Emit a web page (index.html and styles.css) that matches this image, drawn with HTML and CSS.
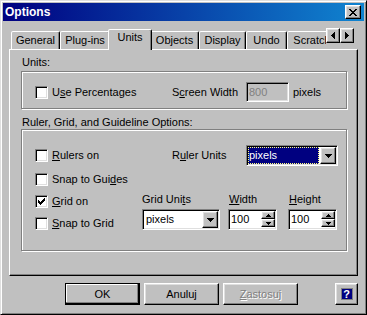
FILE: index.html
```html
<!DOCTYPE html>
<html>
<head>
<meta charset="utf-8">
<title>Options</title>
<link rel="stylesheet" href="styles.css">
</head>
<body>
<div class="window">
  <div class="titlebar">
    <span class="title">Options</span>
    <span class="close raised">
      <svg width="8" height="7" viewBox="0 0 8 7" shape-rendering="crispEdges"><path fill="#000" d="M0 0h2v1h-2z M6 0h2v1h-2z M1 1h2v1h-2z M5 1h2v1h-2z M2 2h4v1h-4z M3 3h2v1h-2z M2 4h4v1h-4z M1 5h2v1h-2z M5 5h2v1h-2z M0 6h2v1h-2z M6 6h2v1h-2z"/></svg>
    </span>
  </div>
  <div class="body">
    <div class="tabstrip">
      <div class="tabs">
        <div class="tab t-general">General</div>
        <div class="tab t-plugins">Plug-ins</div>
        <div class="tab t-units selected">Units</div>
        <div class="tab t-objects">Objects</div>
        <div class="tab t-display">Display</div>
        <div class="tab t-undo">Undo</div>
        <div class="tab t-scratch">Scratch</div>
      </div>
      <div class="tabscroll">
        <span class="sbtn raised"><svg width="4" height="7" viewBox="0 0 4 7" shape-rendering="crispEdges"><path fill="#000" d="M0 3h1v1h-1z M1 2h1v3h-1z M2 1h1v5h-1z M3 0h1v7h-1z"/></svg></span>
        <span class="sbtn raised"><svg width="4" height="7" viewBox="0 0 4 7" shape-rendering="crispEdges"><path fill="#000" d="M3 3h1v1h-1z M2 2h1v3h-1z M1 1h1v5h-1z M0 0h1v7h-1z"/></svg></span>
      </div>
    </div>
    <div class="panel">
      <div class="grouplabel">Units:</div>
      <div class="group g1">
        <label class="check w137"><span class="box"></span><span>U<u>s</u>e Percentages</span></label>
        <span class="lbl w74">S<u>c</u>reen Width</span>
        <span class="edit disabled">800</span>
        <span class="lbl pixels">pixels</span>
      </div>
      <div class="grouplabel gl2">Ruler, Grid, and Guideline Options:</div>
      <div class="group g2">
        <div class="rowA">
          <label class="check w137"><span class="box"></span><span><u>R</u>ulers on</span></label>
          <span class="lbl w74">R<u>u</u>ler Units</span>
          <div class="combo c-ruler">
            <div class="combo-text hl">pixels</div>
            <span class="dd raised"><svg width="7" height="4" viewBox="0 0 7 4" shape-rendering="crispEdges"><path fill="#000" d="M0 0h7v1h-7z M1 1h5v1h-5z M2 2h3v1h-3z M3 3h1v1h-1z"/></svg></span>
          </div>
        </div>
        <div class="rowB">
          <label class="check"><span class="box"></span><span>Snap to Gui<u>d</u>es</span></label>
        </div>
        <div class="lower">
          <div class="leftcol">
            <label class="check"><span class="box"><svg width="7" height="7" viewBox="0 0 7 7" shape-rendering="crispEdges"><path fill="#000" d="M6 0h1v1h-1z M5 1h2v1h-2z M0 2h1v1h-1z M4 2h3v1h-3z M0 3h2v1h-2z M3 3h3v1h-3z M0 4h5v1h-5z M1 5h3v1h-3z M2 6h1v1h-1z"/></svg></span><span><u>G</u>rid on</span></label>
            <label class="check second"><span class="box"></span><span><u>S</u>nap to Grid</span></label>
          </div>
          <div class="fields">
            <span class="lbl">Grid Uni<u>t</u>s</span>
            <span class="lbl ind"><u>W</u>idth</span>
            <span class="lbl ind"><u>H</u>eight</span>
            <div class="combo c-grid">
              <div class="combo-text">pixels</div>
              <span class="dd raised"><svg width="7" height="4" viewBox="0 0 7 4" shape-rendering="crispEdges"><path fill="#000" d="M0 0h7v1h-7z M1 1h5v1h-5z M2 2h3v1h-3z M3 3h1v1h-1z"/></svg></span>
            </div>
            <div class="spin">
              <span class="val">100</span>
              <span class="updown">
                <span class="raised"><svg width="5" height="3" viewBox="0 0 5 3" shape-rendering="crispEdges"><path fill="#000" d="M2 0h1v1h-1z M1 1h3v1h-3z M0 2h5v1h-5z"/></svg></span>
                <span class="raised"><svg width="5" height="3" viewBox="0 0 5 3" shape-rendering="crispEdges"><path fill="#000" d="M0 0h5v1h-5z M1 1h3v1h-3z M2 2h1v1h-1z"/></svg></span>
              </span>
            </div>
            <div class="spin">
              <span class="val">100</span>
              <span class="updown">
                <span class="raised"><svg width="5" height="3" viewBox="0 0 5 3" shape-rendering="crispEdges"><path fill="#000" d="M2 0h1v1h-1z M1 1h3v1h-3z M0 2h5v1h-5z"/></svg></span>
                <span class="raised"><svg width="5" height="3" viewBox="0 0 5 3" shape-rendering="crispEdges"><path fill="#000" d="M0 0h5v1h-5z M1 1h3v1h-3z M2 2h1v1h-1z"/></svg></span>
              </span>
            </div>
          </div>
        </div>
      </div>
    </div>
    <div class="footer">
      <span class="btn default">OK</span>
      <span class="btn">Anuluj</span>
      <span class="btn disabled"><u>Z</u>astosuj</span>
      <span class="btn help"><span class="helpicon">?</span></span>
    </div>
  </div>
</div>
</body>
</html>
```
FILE: styles.css
```css
* { box-sizing: border-box; }
html, body { margin: 0; padding: 0; }
body {
  width: 367px;
  height: 315px;
  overflow: hidden;
  background: #c0c0c0;
  font-family: "Liberation Sans", Arial, sans-serif;
  font-size: 11px;
  line-height: 13px;
  color: #000;
}
u { text-decoration: underline; text-underline-offset: 1px; }

.window {
  width: 367px;
  height: 315px;
  background: #c0c0c0;
  border: 1px solid;
  border-color: #dfdfdf #000 #000 #dfdfdf;
  box-shadow: inset 1px 1px #fff, inset -1px -1px #808080;
  padding: 2px;
  display: flex;
  flex-direction: column;
}

.raised {
  background: #c0c0c0;
  border: 1px solid;
  border-color: #fff #000 #000 #fff;
  box-shadow: inset -1px -1px #808080, inset 1px 1px #dfdfdf;
  display: flex;
  align-items: center;
  justify-content: center;
}

.titlebar {
  height: 18px;
  display: flex;
  align-items: center;
  justify-content: space-between;
  padding: 0 3px 0 2px;
  background: linear-gradient(to right, #000080, #1084d0);
}
.title {
  color: #fff;
  font-weight: bold;
  font-size: 12px;
}
.close { width: 16px; height: 14px; }

.body {
  padding: 7px 6px 0 6px;
  display: flex;
  flex-direction: column;
}

/* tabs */
.tabstrip {
  display: flex;
  height: 22px;
  margin-bottom: -1px;
  position: relative;
  z-index: 1;
}
.tabs {
  flex: 1 1 0;
  min-width: 0;
  display: flex;
  align-items: flex-start;
  overflow: hidden;
  padding-left: 2px;
}
.tab {
  flex: none;
  height: 18px;
  margin-top: 3px;
  border: 1px solid;
  border-bottom: none;
  border-color: #fff #000 transparent #fff;
  box-shadow: inset -1px 0 #808080;
  border-radius: 2px 2px 0 0;
  background: #c0c0c0;
  text-align: center;
  padding-top: 2px;
  white-space: nowrap;
}
.t-general { width: 49px; }
.t-plugins { width: 50px; }
.t-units { width: 40px; }
.t-objects { width: 49px; }
.t-display { width: 47px; }
.t-undo { width: 41px; }
.t-scratch { width: 50px; }
.tab.selected {
  width: 44px;
  height: 21px;
  margin: 1px -2px 0 -2px;
  padding-top: 1px;
  position: relative;
  z-index: 2;
}
.tabscroll {
  display: flex;
  align-self: flex-start;
  margin-right: 4px;
}
.sbtn { width: 14px; height: 15px; }

/* panel */
.panel {
  width: 349px;
  height: 227px;
  border: 1px solid;
  border-color: #fff #000 #000 #fff;
  box-shadow: inset -1px -1px #808080;
  padding: 6px 0 0 11px;
}
.grouplabel {
  height: 13px;
  padding-left: 1px;
}
.gl2 { margin-top: 7px; }
.group {
  width: 326px;
  border: 1px solid #808080;
  box-shadow: inset 1px 1px #fff, 1px 1px #fff;
}
.g1 {
  margin-top: 2px;
  height: 38px;
  padding: 9px 0 5px 13px;
  display: flex;
  align-items: center;
}
.g2 {
  height: 122px;
  padding: 15px 0 0 13px;
}

.check {
  display: flex;
  align-items: center;
  gap: 4px;
  height: 13px;
  white-space: nowrap;
}
.box {
  width: 13px;
  height: 13px;
  flex: none;
  background: #fff;
  border: 1px solid;
  border-color: #808080 #fff #fff #808080;
  box-shadow: inset 1px 1px #000, inset -1px -1px #dfdfdf;
  display: flex;
  align-items: center;
  justify-content: center;
}
.w137 { width: 137px; }
.w74 { width: 74px; }
.lbl { white-space: nowrap; }
.pixels { margin-left: 4px; }

.edit {
  width: 43px;
  height: 20px;
  border: 1px solid;
  border-color: #808080 #fff #fff #808080;
  box-shadow: inset 1px 1px #000, inset -1px -1px #dfdfdf;
  padding: 0 2px;
  line-height: 18px;
}
.edit.disabled { background: #c0c0c0; color: #808080; }

.rowA {
  height: 21px;
  display: flex;
  align-items: center;
}
.rowB { margin-top: 7px; }
.lower {
  margin-top: 7px;
  display: flex;
}
.leftcol {
  width: 107px;
  padding-top: 2px;
}
.check.second { margin-top: 9px; }
.fields {
  display: grid;
  grid-template-columns: 86px 60px 49px;
  grid-template-rows: 13px 21px;
  row-gap: 3px;
}
.ind { padding-left: 1px; }

.combo {
  height: 21px;
  border: 1px solid;
  border-color: #808080 #fff #fff #808080;
  box-shadow: inset 1px 1px #000, inset -1px -1px #dfdfdf;
  background: #fff;
  display: flex;
  padding: 1px;
}
.c-ruler { width: 92px; }
.c-grid { width: 78px; }
.combo-text {
  flex: 1;
  display: flex;
  align-items: center;
  padding-left: 2px;
}
.combo-text.hl {
  background: #000080;
  color: #fff;
  padding-left: 1px;
  outline: 1px dotted #ffff80;
  outline-offset: -1px;
  margin-right: 1px;
}
.dd { width: 16px; height: 17px; flex: none; }

.spin {
  width: 49px;
  height: 21px;
  border: 1px solid;
  border-color: #808080 #fff #fff #808080;
  box-shadow: inset 1px 1px #000, inset -1px -1px #dfdfdf;
  background: #fff;
  display: flex;
  padding: 1px;
}
.spin .val {
  flex: 1;
  padding-left: 1px;
  line-height: 17px;
}
.updown {
  width: 14px;
  display: flex;
  flex-direction: column;
}
.updown .raised { height: 8px; }

/* footer */
.footer {
  display: flex;
  justify-content: flex-end;
  gap: 4px;
  margin-top: 7px;
}
.btn {
  width: 75px;
  height: 22px;
  background: #c0c0c0;
  border: 1px solid;
  border-color: #fff #000 #000 #fff;
  box-shadow: inset -1px -1px #808080, inset 1px 1px #dfdfdf;
  display: flex;
  align-items: center;
  justify-content: center;
}
.btn.default {
  border-color: #000;
  box-shadow: inset -1px -1px #000, inset -2px -2px #808080, inset 1px 1px #fff;
}
.btn.disabled {
  color: #808080;
  text-shadow: 1px 1px #fff;
}
.btn.help {
  width: 23px;
  margin-left: 33px;
}
.helpicon {
  width: 12px;
  height: 12px;
  background: #000080;
  color: #fff;
  font-weight: bold;
  font-size: 11px;
  line-height: 12px;
  text-align: center;
  border: 1px solid #808080;
  display: flex;
  align-items: center;
  justify-content: center;
}
```
